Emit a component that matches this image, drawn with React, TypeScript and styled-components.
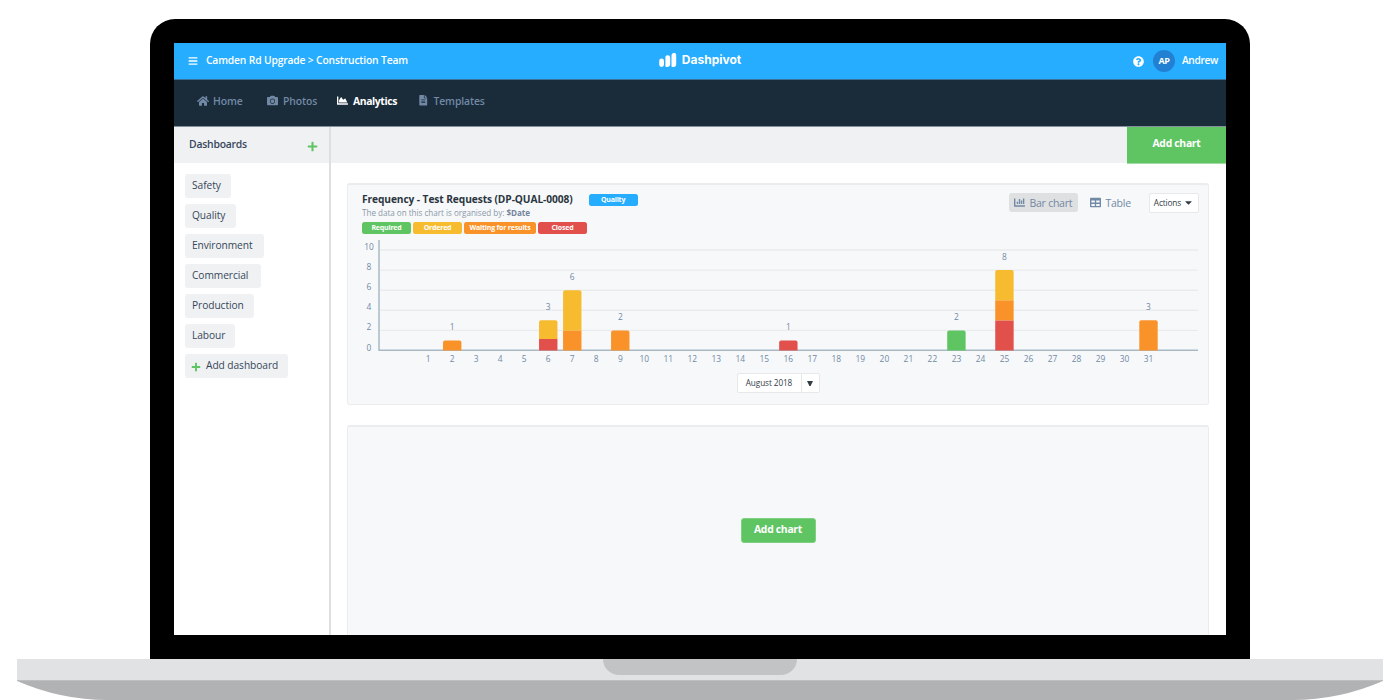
import React from "react";
import styled, { createGlobalStyle } from "styled-components";
import {
  FaBars,
  FaCamera,
  FaCaretDown,
  FaChartArea,
  FaChartBar,
  FaFileAlt,
  FaHome,
  FaPlus,
  FaQuestionCircle,
  FaTable,
} from "react-icons/fa";

const c = {
  blue: "#26adff",
  navy: "#1a2b3a",
  green: "#5fc462",
  yellow: "#f6bb2e",
  orange: "#f99228",
  red: "#e2504c",
  slate: "#7189a5",
  ink: "#35475a",
  panel: "#f7f8fa",
  bar: "#f0f1f3",
  line: "#ebeced",
};

const GlobalStyle = createGlobalStyle`
  *, *::before, *::after { box-sizing: border-box; }
  body {
    margin: 0;
    background: #fff;
    font-family: "Open Sans", "Noto Sans", sans-serif;
    overflow: hidden;
  }
  button { font-family: inherit; border: 0; margin: 0; padding: 0; }
  svg { display: block; flex: none; }
`;

const Stage = styled.div`
  width: 1400px;
  height: 700px;
  padding-top: 19px;
  display: flex;
  flex-direction: column;
  align-items: center;
  overflow: hidden;
`;

const Lid = styled.div`
  width: 1100px;
  height: 640px;
  padding: 24px;
  background: #000;
  border-radius: 25px 25px 0 0;
  flex: none;
`;

const Screen = styled.div`
  width: 1052px;
  height: 592px;
  background: #fff;
  overflow: hidden;
  display: flex;
  flex-direction: column;
`;

const TopBar = styled.header`
  height: 37px;
  flex: none;
  background: ${c.blue};
  border-bottom: 1px solid #3d7195;
  display: grid;
  grid-template-columns: 1fr auto 1fr;
  align-items: center;
  color: #fff;
  padding: 0 8px 0 8px;
`;

const Crumbs = styled.div`
  display: flex;
  align-items: center;
  gap: 8px;
  padding-left: 6px;
  font-size: 10.3px;
  font-weight: 600;
  letter-spacing: -0.16px;
  line-height: 14px;
  white-space: nowrap;
  span { padding-bottom: 2px; }
`;

const Brand = styled.div`
  display: flex;
  align-items: center;
  gap: 5px;
  padding-bottom: 2px;
  font: 700 12px/16px Inter, sans-serif;
`;

const Account = styled.div`
  display: flex;
  align-items: center;
  justify-content: flex-end;
  font-size: 10.2px;
  font-weight: 600;
  letter-spacing: -0.35px;
  line-height: 14px;
`;

const UserName = styled.span`
  padding-bottom: 2px;
`;

const Avatar = styled.span`
  width: 22px;
  height: 22px;
  margin: 0 7px 0 9px;
  border-radius: 50%;
  background: #2280d2;
  font-size: 9px;
  font-weight: 700;
  line-height: 22px;
  text-align: center;
`;

const Nav = styled.nav`
  height: 47px;
  flex: none;
  background: ${c.navy};
  border-bottom: 1px solid #84909b;
  display: flex;
  padding: 0 23px 5px;
`;

const NavItem = styled.a<{ $active?: boolean; $width: number; $gap: number }>`
  width: ${(p) => p.$width}px;
  display: flex;
  align-items: center;
  gap: ${(p) => p.$gap}px;
  color: ${(p) => (p.$active ? "#fff" : c.slate)};
  font-size: 10.4px;
  font-weight: ${(p) => (p.$active ? 700 : 600)};
  letter-spacing: ${(p) => (p.$active ? -0.4 : -0.12)}px;
  white-space: nowrap;
`;

const Body = styled.div`
  flex: 1;
  min-height: 0;
  display: flex;
`;

const Sidebar = styled.aside`
  width: 157px;
  flex: none;
  border-right: 2px solid #dedfe0;
`;

const SidebarHead = styled.div`
  height: 36px;
  background: ${c.bar};
  display: flex;
  align-items: center;
  justify-content: space-between;
  padding: 0 11px 0 15px;
  color: ${c.ink};
  font-size: 10.4px;
  font-weight: 600;
  letter-spacing: -0.22px;
  span { padding-bottom: 2px; }
  svg { margin-top: 3px; }
`;

const DashList = styled.div`
  display: flex;
  flex-direction: column;
  align-items: flex-start;
  gap: 6px;
  padding: 11px 0 0 11px;
`;

const DashItem = styled.button<{ $width: number }>`
  width: ${(p) => p.$width}px;
  height: 24px;
  padding: 0 0 2px 7px;
  border-radius: 3px;
  background: ${c.bar};
  color: ${c.ink};
  display: flex;
  align-items: center;
  gap: 5px;
  font-size: 10.2px;
  font-weight: 500;
  letter-spacing: -0.06px;
  white-space: nowrap;
  svg { margin: 3px 0 0 -1px; }
`;

const Main = styled.main`
  flex: 1;
  min-width: 0;
  display: flex;
  flex-direction: column;
`;

const Toolbar = styled.div`
  height: 36px;
  flex: none;
  background: ${c.bar};
  display: flex;
  justify-content: flex-end;
`;

const ToolbarButton = styled.button`
  width: 99px;
  height: 37px;
  padding-bottom: 4px;
  border-bottom: 1px solid #a3dca5;
  background: ${c.green};
  color: #fff;
  font-size: 10.4px;
  font-weight: 700;
  letter-spacing: -0.3px;
`;

const Panels = styled.div`
  flex: 1;
  min-height: 0;
  overflow: hidden;
  padding: 20px 17px 0 16px;
  display: flex;
  flex-direction: column;
  gap: 20px;
`;

const Panel = styled.section<{ $height: number }>`
  height: ${(p) => p.$height}px;
  flex: none;
  background: ${c.panel};
  border: 1px solid ${c.line};
  border-top-width: 2px;
  border-radius: 3px;
`;

const PanelHead = styled.div`
  height: 55px;
  display: flex;
  justify-content: space-between;
  padding: 6px 9px 0 14px;
`;

const TitleRow = styled.div`
  display: flex;
  align-items: center;
  gap: 16px;
  height: 16px;
  > span { position: relative; top: 1px; }
`;

const Title = styled.h2`
  margin: 0;
  color: #2b3640;
  font-size: 10.2px;
  font-weight: 700;
  letter-spacing: -0.09px;
  line-height: 16px;
  white-space: nowrap;
`;

const Subtitle = styled.p`
  margin: 0;
  color: #8b98a7;
  font-size: 8.1px;
  line-height: 12px;
  height: 12px;
  letter-spacing: -0.02px;
  white-space: nowrap;
  b { color: #73849a; font-weight: 700; }
`;

const Legend = styled.div`
  display: flex;
  gap: 2px;
  padding-top: 2.5px;
`;

const Tag = styled.span<{ $color: string; $width: number }>`
  width: ${(p) => p.$width}px;
  height: 12.5px;
  border-radius: 2.5px;
  background: ${(p) => p.$color};
  color: #fff;
  font-size: 7px;
  font-weight: 700;
  letter-spacing: -0.2px;
  line-height: 12px;
  text-align: center;
  white-space: nowrap;
`;

const Controls = styled.div`
  display: flex;
  height: 20px;
  margin-top: 2px;
`;

const ViewButton = styled.button<{ $active?: boolean; $width: number }>`
  width: ${(p) => p.$width}px;
  height: 19px;
  margin-right: 7px;
  padding-left: 5px;
  display: flex;
  align-items: center;
  gap: 4.500px;
  border-radius: 3px;
  background: ${(p) => (p.$active ? "#dfe0e1" : "transparent")};
  color: ${c.slate};
  font-size: 10.5px;
  font-weight: 500;
  letter-spacing: -0.25px;
  white-space: nowrap;
  svg { margin-bottom: 1px; }
`;

const ActionsButton = styled.button`
  width: 50px;
  height: 20px;
  margin-left: -2px;
  border: 1px solid #e6e8ea;
  border-radius: 2px;
  background: #fff;
  color: #333d47;
  display: flex;
  align-items: center;
  justify-content: center;
  gap: 2px;
  padding-bottom: 1px;
  font-size: 8.3px;
  font-weight: 500;
  letter-spacing: -0.15px;
`;

const ChartLabel = styled.text`
  fill: ${c.slate};
  font-family: "Open Sans", sans-serif;
  font-size: 8.4px;
  text-anchor: middle;
`;

const MonthRow = styled.div`
  display: flex;
  justify-content: center;
  padding-top: 2px;
`;

const MonthPicker = styled.div`
  width: 83px;
  height: 20px;
  border: 1px solid #e6e8ea;
  border-radius: 2px;
  background: #fff;
  display: flex;
  color: #333d47;
  font-size: 8.2px;
  font-weight: 500;
  letter-spacing: -0.08px;
  line-height: 18px;
`;

const Month = styled.span`
  width: 64px;
  border-right: 1px solid #e6e8ea;
  text-align: center;
`;

const Arrow = styled.span`
  flex: 1;
  display: grid;
  place-items: center;
`;

const EmptyPanel = styled(Panel)`
  display: flex;
  justify-content: center;
  align-items: flex-start;
  padding-top: 91px;
`;

const AddChart = styled.button`
  width: 75px;
  height: 25px;
  padding-bottom: 3px;
  border: 1px solid #7fd081;
  border-radius: 3px;
  background: ${c.green};
  color: #fff;
  font-size: 10.4px;
  font-weight: 700;
  letter-spacing: -0.3px;
`;

const Base = styled.div`
  width: 1366px;
  height: 22px;
  flex: none;
  background: #e1e2e4;
  border-bottom: 1px solid #bdbec0;
  display: flex;
  justify-content: center;
`;

const Notch = styled.div`
  width: 194px;
  height: 16px;
  border-radius: 0 0 16px 16px;
  background: #c2c3c5;
`;

const DASHBOARDS: [string, number][] = [
  ["Safety", 46],
  ["Quality", 51],
  ["Environment", 79],
  ["Commercial", 76],
  ["Production", 69],
  ["Labour", 50],
];

/* Segments run from the bottom of each bar upwards. */
const BARS: { day: number; parts: [string, number][] }[] = [
  { day: 2, parts: [[c.orange, 1]] },
  { day: 6, parts: [[c.red, 1.15], [c.yellow, 1.85]] },
  { day: 7, parts: [[c.orange, 2], [c.yellow, 4]] },
  { day: 9, parts: [[c.orange, 2]] },
  { day: 16, parts: [[c.red, 1]] },
  { day: 23, parts: [[c.green, 2]] },
  { day: 25, parts: [[c.red, 3], [c.orange, 2], [c.yellow, 3]] },
  { day: 31, parts: [[c.orange, 3]] },
];

const dayX = (day: number) => 80.2 + (day - 1) * 24.01;
const valueY = (value: number) => 110.5 - value * 10.05;

function FrequencyChart() {
  return (
    <svg width="858" height="131" viewBox="0 0 858 131">
      {[2, 4, 6, 8, 10].map((v) => (
        <line key={v} x1="32" x2="850" y1={valueY(v)} y2={valueY(v)} stroke="#e9ebed" strokeWidth="1.4" />
      ))}
      {[0, 2, 4, 6, 8, 10].map((v) => (
        <ChartLabel key={v} x="21" y={valueY(v)}>{v}</ChartLabel>
      ))}
      <path d="M31 0V110.3H850" fill="none" stroke="#a9b9c4" strokeWidth="1.5" />
      {BARS.map(({ day, parts }) => {
        const x = dayX(day) - 9.2;
        const total = parts.reduce((sum, [, n]) => sum + n, 0);
        let base = 0;
        return (
          <g key={day}>
            {parts.map(([color, n], i) => {
              const bottom = valueY(base);
              base += n;
              const top = valueY(base);
              const last = i === parts.length - 1;
              return last ? (
                <path
                  key={i}
                  fill={color}
                  d={`M${x} ${bottom}V${top + 2}Q${x} ${top} ${x + 2} ${top}H${x + 16.4}Q${x + 18.4} ${top} ${x + 18.4} ${top + 2}V${bottom}Z`}
                />
              ) : (
                <rect key={i} fill={color} x={x} y={top} width="18.4" height={bottom - top} />
              );
            })}
            <ChartLabel x={dayX(day)} y={valueY(total) - 10.4}>{total}</ChartLabel>
          </g>
        );
      })}
      {Array.from({ length: 31 }, (_, i) => i + 1).map((d) => (
        <ChartLabel key={d} x={dayX(d)} y="122.4">{d}</ChartLabel>
      ))}
    </svg>
  );
}

function Logo() {
  return (
    <svg width="18" height="16" viewBox="0 0 18 16" fill="#fff">
      <path d="M.2 9a2.4 2.4 0 0 1 4.8 0v3.600a2.4 2.4 0 0 1-4.8 0z" />
      <path d="M6.4 6a2.3 2.3 0 0 1 4.8-.6v7.200a2.700 2.700 0 0 1-2.700 2.400H7.300a1 1 0 0 1-.9-1z" />
      <path d="M12.500 3.200A2.400 2.400 0 0 1 17.200 2.600V12.300a2.700 2.700 0 0 1-2.700 2.700h-1.200a1 1 0 0 1-.8-1z" />
    </svg>
  );
}

export default function App() {
  return (
    <Stage>
      <GlobalStyle />
      <Lid>
        <Screen>
          <TopBar>
            <Crumbs>
              <FaBars size={10} />
              <span>Camden Rd Upgrade &gt; Construction Team</span>
            </Crumbs>
            <Brand>
              <Logo />
              Dashpivot
            </Brand>
            <Account>
              <FaQuestionCircle size={11} />
              <Avatar>AP</Avatar>
              <UserName>Andrew</UserName>
            </Account>
          </TopBar>
          <Nav>
            <NavItem $width={70} $gap={4}><FaHome size={12} /><span>Home</span></NavItem>
            <NavItem $width={70} $gap={5}><FaCamera size={11} /><span>Photos</span></NavItem>
            <NavItem $width={81} $gap={5} $active><FaChartArea size={11} /><span>Analytics</span></NavItem>
            <NavItem $width={80} $gap={5}><FaFileAlt size={10.5} /><span>Templates</span></NavItem>
          </Nav>
          <Body>
            <Sidebar>
              <SidebarHead>
                <span>Dashboards</span>
                <FaPlus size={11} color={c.green} />
              </SidebarHead>
              <DashList>
                {DASHBOARDS.map(([name, width]) => (
                  <DashItem key={name} $width={width}>{name}</DashItem>
                ))}
                <DashItem $width={103}>
                  <FaPlus size={10} color={c.green} />
                  Add dashboard
                </DashItem>
              </DashList>
            </Sidebar>
            <Main>
              <Toolbar>
                <ToolbarButton>Add chart</ToolbarButton>
              </Toolbar>
              <Panels>
                <Panel $height={222}>
                  <PanelHead>
                    <div>
                      <TitleRow>
                        <Title>Frequency - Test Requests (DP-QUAL-0008)</Title>
                        <Tag $color={c.blue} $width={49}>Quality</Tag>
                      </TitleRow>
                      <Subtitle>The data on this chart is organised by: <b>$Date</b></Subtitle>
                      <Legend>
                        <Tag $color={c.green} $width={49}>Required</Tag>
                        <Tag $color={c.yellow} $width={49}>Ordered</Tag>
                        <Tag $color={c.orange} $width={72}>Waiting for results</Tag>
                        <Tag $color={c.red} $width={49}>Closed</Tag>
                      </Legend>
                    </div>
                    <Controls>
                      <ViewButton $active $width={69}><FaChartBar size={11} />Bar chart</ViewButton>
                      <ViewButton $width={59}><FaTable size={11} />Table</ViewButton>
                      <ActionsButton>Actions<FaCaretDown size={11} /></ActionsButton>
                    </Controls>
                  </PanelHead>
                  <FrequencyChart />
                  <MonthRow>
                    <MonthPicker>
                      <Month>August 2018</Month>
                      <Arrow>
                        <svg width="6" height="5" viewBox="0 0 6 5"><path d="M0 0H6L3.600 5H2.400Z" fill="#333d47" /></svg>
                      </Arrow>
                    </MonthPicker>
                  </MonthRow>
                </Panel>
                <EmptyPanel $height={260}>
                  <AddChart>Add chart</AddChart>
                </EmptyPanel>
              </Panels>
            </Main>
          </Body>
        </Screen>
      </Lid>
      <Base>
        <Notch />
      </Base>
      <svg width="1366" height="19" viewBox="0 0 1366 19">
        <path d="M0 0H1366Q1322 19 1276 19H90Q44 19 0 0Z" fill="#b1b2b4" />
      </svg>
    </Stage>
  );
}
